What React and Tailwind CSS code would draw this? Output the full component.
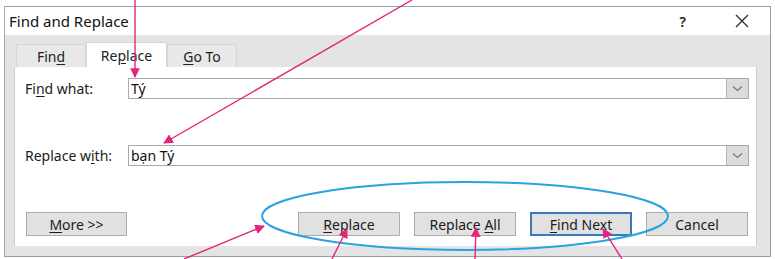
import React from "react";

const U = ({ children }) => <span className="underline underline-offset-[2px]">{children}</span>;

function Btn({ children, blue }) {
  return (
    <div
      className={
        "h-[24px] w-[102px] flex items-center justify-center bg-[#e1e1e1] text-[14px] text-[#1b1b1b] " +
        (blue ? "border-2 border-[#3a79b8]" : "border border-[#adadad]")
      }
    >
      <span>{children}</span>
    </div>
  );
}

function Field({ value }) {
  return (
    <div className="h-[21px] w-[621px] border border-[#a9a9a9] bg-white flex items-center justify-between">
      <span className="pl-[2px] text-[14px] text-[#111]">{value}</span>
      <div className="h-[19px] w-[22px] bg-[#dcdcdc] border-l border-[#b5b5b5] flex items-center justify-center">
        <svg width="11" height="7" viewBox="0 0 11 7">
          <path d="M1 1.5 L5.5 5.5 L10 1.5" fill="none" stroke="#7a7a7a" strokeWidth="1.2" />
        </svg>
      </div>
    </div>
  );
}

export default function App() {
  return (
    <div className="relative w-[775px] h-[259px] bg-white overflow-hidden font-['Noto_Sans',sans-serif] pt-[6px] pl-[4px]">
      <div className="w-[767px] h-[251px] flex flex-col bg-[#e4e4e4] border-t border-t-[#8ea3b6] border-l border-l-[#a8a8a8] border-r border-r-[#8f9f9c] border-b border-b-[#8fa0a8]">
        <div className="h-[28px] bg-white flex items-center pl-[4px] pr-[20px]">
          <span className="text-[15px] text-[#111] flex-1">Find and Replace</span>
          <span className="text-[14px] text-[#222] mr-[48px] font-semibold">?</span>
          <svg width="16" height="16" viewBox="0 0 16 16">
            <path d="M2 2 L14 14 M14 2 L2 14" stroke="#333" strokeWidth="1.4" />
          </svg>
        </div>
        <div className="h-[32px] flex items-end pl-[11px]">
          <div className="h-[23px] w-[70px] border border-b-0 border-[#d6d6d6] bg-[#e8e8e8] flex items-center justify-center text-[14px] text-[#222]">
            <span>
              Fin<U>d</U>
            </span>
          </div>
          <div className="h-[25px] w-[81px] bg-white border border-b-0 border-[#d6d6d6] flex items-center justify-center text-[14px] text-[#222]">
            <span>
              Re<U>p</U>lace
            </span>
          </div>
          <div className="h-[23px] w-[70px] border border-b-0 border-[#d6d6d6] bg-[#e8e8e8] flex items-center justify-center text-[14px] text-[#222]">
            <span>
              <U>G</U>o To
            </span>
          </div>
        </div>
        <div className="flex-1 ml-[9px] mr-[13px] mb-[10px] bg-white border-l border-r border-[#cfcfcf] flex flex-col pl-[10px] pt-[11px]">
          <div className="flex items-center">
            <span className="w-[103px] text-[14px] text-[#1b1b1b]">
              Fi<U>n</U>d what:
            </span>
            <Field value="Tý" />
          </div>
          <div className="flex items-center mt-[46px]">
            <span className="w-[103px] text-[14px] text-[#1b1b1b]">
              Replace w<U>i</U>th:
            </span>
            <Field value="bạn Tý" />
          </div>
          <div className="flex items-center mt-[46px] pl-[1px]">
            <div className="h-[24px] w-[101px] flex items-center justify-center bg-[#e1e1e1] border border-[#adadad] text-[14px] text-[#1b1b1b]">
              <span>
                <U>M</U>ore &gt;&gt;
              </span>
            </div>
            <div className="ml-[171px] flex gap-[14px]">
              <Btn>
                <U>R</U>eplace
              </Btn>
              <Btn>
                Replace <U>A</U>ll
              </Btn>
              <Btn blue>
                <U>F</U>ind Next
              </Btn>
              <Btn>Cancel</Btn>
            </div>
          </div>
        </div>
      </div>
      <svg className="absolute left-0 top-0 pointer-events-none" width="775" height="259" viewBox="0 0 775 259">
        <defs>
          <marker id="ah" viewBox="0 0 10 10" refX="9" refY="5" markerWidth="7" markerHeight="7" orient="auto-start-reverse">
            <path d="M0 0 L10 5 L0 10 Z" fill="#e4257a" />
          </marker>
        </defs>
        <ellipse cx="465" cy="216" rx="203" ry="34" fill="none" stroke="#2aa3e2" strokeWidth="2" />
        <g stroke="#e4257a" strokeWidth="1.4" fill="none" markerEnd="url(#ah)">
          <line x1="135" y1="0" x2="135" y2="77" />
          <line x1="412" y1="0" x2="164" y2="143" />
          <line x1="184" y1="259" x2="264" y2="226" />
          <line x1="332" y1="259" x2="347" y2="229" />
          <line x1="475" y1="259" x2="476" y2="228" />
          <line x1="622" y1="259" x2="603" y2="229" />
        </g>
      </svg>
    </div>
  );
}
